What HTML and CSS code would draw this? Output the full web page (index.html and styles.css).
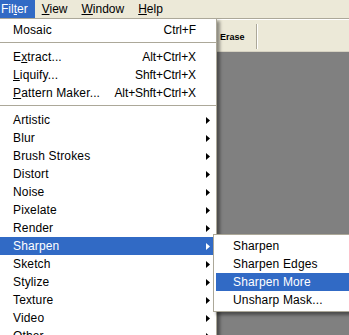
FILE: index.html
```html
<!DOCTYPE html>
<html lang="en">
<head>
    <meta charset="UTF-8">
    <meta name="viewport" content="width=device-width, initial-scale=1.0">
    <title>Filter menu</title>
    <link rel="stylesheet" href="styles.css">
</head>
<body>
    <div class="window">
        <div class="menubar">
            <div class="mb-item active">Fil<u>t</u>er</div>
            <div class="mb-item"><u>V</u>iew</div>
            <div class="mb-item"><u>W</u>indow</div>
            <div class="mb-item"><u>H</u>elp</div>
        </div>
        <div class="toolbar">
            <span class="tool-label">Erase</span>
            <span class="tool-sep"></span>
        </div>
        <div class="workspace"></div>

        <!-- filter dropdown -->
        <div class="menu">
            <div class="item"><span class="label">Mosaic</span><span class="key">Ctrl+F</span><span class="arrow"></span></div>
            <div class="sep"></div>
            <div class="item"><span class="label">E<u>x</u>tract...</span><span class="key">Alt+Ctrl+X</span><span class="arrow"></span></div>
            <div class="item"><span class="label"><u>L</u>iquify...</span><span class="key">Shft+Ctrl+X</span><span class="arrow"></span></div>
            <div class="item"><span class="label"><u>P</u>attern Maker...</span><span class="key">Alt+Shft+Ctrl+X</span><span class="arrow"></span></div>
            <div class="sep"></div>
            <div class="item"><span class="label">Artistic</span><span class="arrow"><svg width="4" height="7"><polygon points="0,0 4,3.5 0,7"/></svg></span></div>
            <div class="item"><span class="label">Blur</span><span class="arrow"><svg width="4" height="7"><polygon points="0,0 4,3.5 0,7"/></svg></span></div>
            <div class="item"><span class="label">Brush Strokes</span><span class="arrow"><svg width="4" height="7"><polygon points="0,0 4,3.5 0,7"/></svg></span></div>
            <div class="item"><span class="label">Distort</span><span class="arrow"><svg width="4" height="7"><polygon points="0,0 4,3.5 0,7"/></svg></span></div>
            <div class="item"><span class="label">Noise</span><span class="arrow"><svg width="4" height="7"><polygon points="0,0 4,3.5 0,7"/></svg></span></div>
            <div class="item"><span class="label">Pixelate</span><span class="arrow"><svg width="4" height="7"><polygon points="0,0 4,3.5 0,7"/></svg></span></div>
            <div class="item"><span class="label">Render</span><span class="arrow"><svg width="4" height="7"><polygon points="0,0 4,3.5 0,7"/></svg></span></div>
            <div class="item active"><span class="label">Sharpen</span><span class="arrow"><svg width="4" height="7"><polygon points="0,0 4,3.5 0,7"/></svg></span>
                <div class="submenu">
                    <div class="item"><span class="label">Sharpen</span></div>
                    <div class="item"><span class="label">Sharpen Edges</span></div>
                    <div class="item active"><span class="label">Sharpen More</span></div>
                    <div class="item"><span class="label">Unsharp Mask...</span></div>
                </div>
            </div>
            <div class="item"><span class="label">Sketch</span><span class="arrow"><svg width="4" height="7"><polygon points="0,0 4,3.5 0,7"/></svg></span></div>
            <div class="item"><span class="label">Stylize</span><span class="arrow"><svg width="4" height="7"><polygon points="0,0 4,3.5 0,7"/></svg></span></div>
            <div class="item"><span class="label">Texture</span><span class="arrow"><svg width="4" height="7"><polygon points="0,0 4,3.5 0,7"/></svg></span></div>
            <div class="item"><span class="label">Video</span><span class="arrow"><svg width="4" height="7"><polygon points="0,0 4,3.5 0,7"/></svg></span></div>
            <div class="item"><span class="label">Other</span><span class="arrow"><svg width="4" height="7"><polygon points="0,0 4,3.5 0,7"/></svg></span></div>
        </div>
    </div>
</body>
</html>
```

FILE: styles.css
```css
body{
    margin: 0;
    font-family: "Liberation Sans", Arial, sans-serif;
    font-size: 12px;
    color: #000;
}
.window{
    position: relative;
    width: 349px;
    height: 335px;
    overflow: hidden;
    display: flex;
    flex-direction: column;
    background-color: #808080;
}
u{
    text-decoration: underline;
    text-underline-offset: 1px;
}
/* menu bar */
.menubar{
    display: flex;
    height: 18px;
    margin-left: -6px;
    background-color: #ECE9D8;
}
.mb-item{
    padding: 0 7px;
    line-height: 18px;
}
.mb-item.active{
    background-color: #316AC5;
    color: #fff;
}
/* toolbar */
.toolbar{
    display: flex;
    align-items: center;
    height: 32px;
    padding-left: 220px;
    border-top: 1px solid #ACA899;
    box-shadow: inset 0 1px 0 #fff;
    background-color: #ECE9D8;
    border-bottom: 1px solid #d6d2c2;
}
.tool-label{
    font-size: 9px;
    font-weight: bold;
    padding-top: 3px;
}
.tool-sep{
    width: 1px;
    height: 25px;
    margin-left: 11px;
    margin-top: 3px;
    background-color: #ACA899;
    border-right: 1px solid #fff;
}
.workspace{
    flex: 1;
    background-color: #808080;
}
/* dropdown */
.menu{
    position: absolute;
    top: 18px;
    left: -1px;
    width: 218px;
    box-sizing: border-box;
    padding: 2px 0;
    border: 1px solid #ACA899;
    background-color: #fff;
    box-shadow: 3px 3px 3px rgba(0,0,0,0.4);
}
.item{
    position: relative;
    display: flex;
    align-items: center;
    height: 18px;
    padding-left: 13px;
    letter-spacing: 0.15px;
}
.item .label{
    flex: 1;
    white-space: nowrap;
}
.item .key{
    white-space: nowrap;
    letter-spacing: -0.1px;
}
.item .arrow{
    display: flex;
    align-items: center;
    width: 20px;
    padding-left: 10px;
    box-sizing: border-box;
}
.item .arrow polygon{
    fill: #000;
}
.item.active{
    background-color: #316AC5;
    color: #fff;
}
.item.active .arrow polygon{
    fill: #fff;
}
.sep{
    height: 1px;
    margin: 3px 0 5px;
    background-color: #ACA899;
}
/* sharpen submenu */
.submenu{
    position: absolute;
    top: -3px;
    left: calc(100% - 3px);
    width: 139px;
    box-sizing: border-box;
    padding: 2px;
    border: 1px solid #ACA899;
    background-color: #fff;
    color: #000;
    letter-spacing: 0;
    box-shadow: 3px 3px 3px rgba(0,0,0,0.4);
}
.submenu .item{
    padding-left: 17px;
}
```
